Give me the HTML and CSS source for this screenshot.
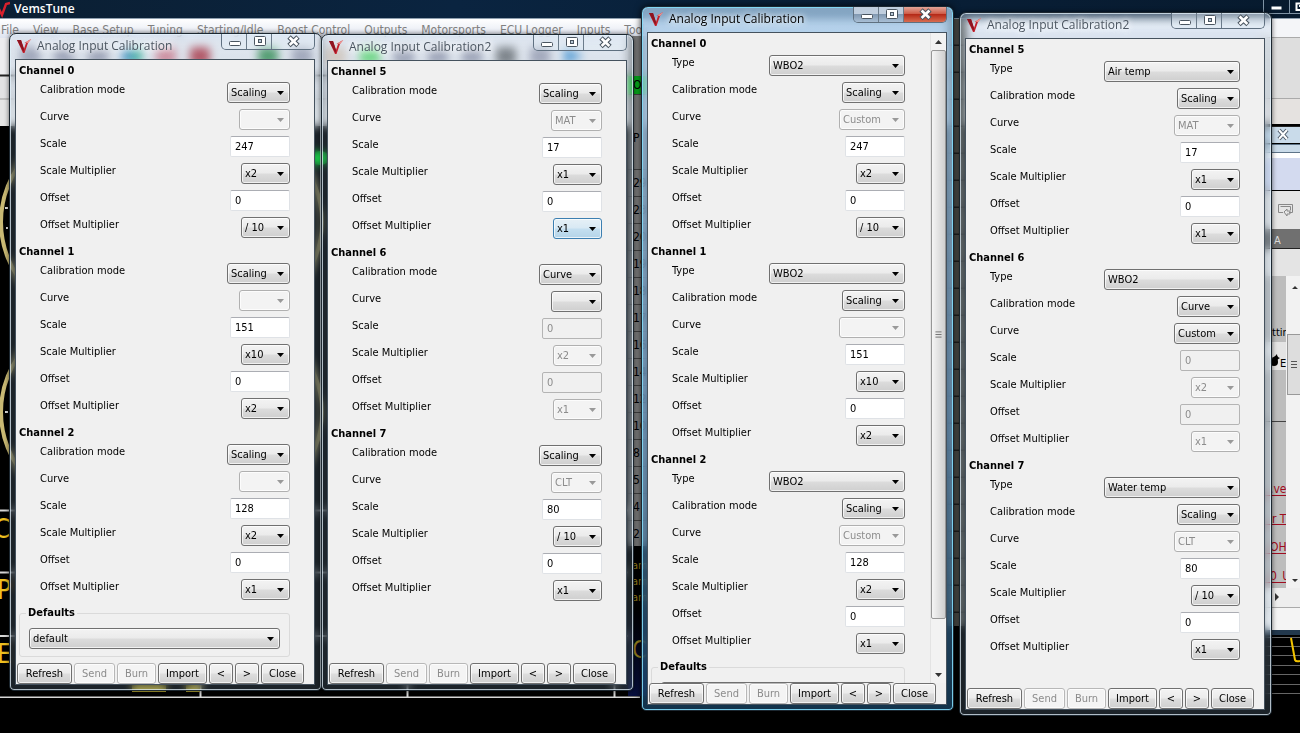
FILE: index.html
```
<!DOCTYPE html>
<html lang="en">
<head>
<meta charset="utf-8">
<title>VemsTune</title>
<link rel="stylesheet" href="styles.css">
</head>
<body>
<div class="desktop">
  <div class="app">
    <header class="app-title">
      <svg class="app-logo" viewBox="0 0 10 18" aria-hidden="true"><path d="M-4 3 L2 15 L6 4 L10 3" fill="none" stroke="#d8202c" stroke-width="2.4"/></svg>
      <h1>VemsTune</h1>
      <svg class="app-caption" viewBox="0 0 37 19" aria-hidden="true"><path d="M.5 0V13.500H37M26.500 0V14" fill="none" stroke="#7f93a5"/><rect x="8.500" y="6.500" width="10" height="3" fill="#fff"/><path d="M33.500 3.500H40V10H33.500ZM36 6H38" fill="none" stroke="#fff" stroke-width="2"/></svg>
    </header>
    <nav class="menu">
      <a href="#">File</a><a href="#">View</a><a href="#">Base Setup</a><a href="#">Tuning</a><a href="#">Starting/Idle</a><a href="#">Boost Control</a><a href="#">Outputs</a><a href="#">Motorsports</a><a href="#">ECU Logger</a><a href="#">Inputs</a><a href="#">Tools</a>
    </nav>
    <div class="toolbar">
      <i class="grey"></i><i class="grey"></i><i class="grey"></i><i class="bluegreen"></i><i class="pink"></i><i class="red"></i><i class="none"></i><i class="green"></i><i class="grey"></i><i class="tan"></i><i class="lime"></i><i class="grey"></i><i class="grey"></i><i class="grey"></i><i class="dark"></i><i class="grey"></i><i class="play"></i>
    </div>
    <svg class="gauges" viewBox="0 0 640 572" aria-hidden="true">
      <g fill="none" stroke="#c9b974" stroke-width="4">
        <circle cx="98" cy="96" r="97"/><circle cx="98" cy="286" r="97"/>
        <circle cx="225" cy="96" r="97"/><circle cx="225" cy="286" r="97"/>
      </g>
      <ellipse cx="320" cy="32" rx="9" ry="7" fill="#0f3"/>
      <path d="M5 82h3M6 102h2M5 286h3" stroke="#ddd" stroke-width="2"/>
      <path d="M0 384.500H640M0 446.500H640M0 510H640M0 571.500H640M200.500 500V572M407.500 500V572M614.500 500V572" stroke="#d6d6d6" stroke-width="2"/>
      <path d="M132 562h34M186 562h14" stroke="#b0a030" stroke-width="8"/>
      <g class="readout"><text x="-6" y="412">C</text><text x="-3" y="473">P</text><text x="-3" y="537">E</text></g>
    </svg>
    <div class="table-strip">
      <span class="led">O</span><span class="head">P</span>
      <span>29</span><span>23</span><span>20</span><span>19</span><span>18</span><span>17</span><span>16</span><span>14</span><span>12</span><span>10</span><span>8</span><span>5</span><span>4</span><span>2</span>
    </div>
    <div class="legend-strip"><span>am</span><span>am</span><span>am</span><b>C</b></div>
    <div class="mid-strip"></div>
    <svg class="right-strip" viewBox="0 0 40 700" aria-hidden="true">
      <rect width="40" height="700" fill="#000"/>
      <rect y="0" width="40" height="19" fill="#f4f5f8"/><rect y="19" width="40" height="60" fill="#dedede"/><path d="M0 18.500H40M0 79.500H40" stroke="#aaa"/>
      <rect y="80" width="40" height="25" fill="#e5e2e0"/><path d="M0 107.500H40" stroke="#222"/>
      <rect y="108" width="40" height="16" fill="#c9dbea"/><path d="M0 125.500H40M0 133.500H40" stroke="#5e7488"/><rect y="126" width="40" height="7" fill="#cadbe9"/>
      <path d="M19 111l8 9M27 111l-8 9" stroke="#4c5968" stroke-width="4"/><path d="M19 111l8 9M27 111l-8 9" stroke="#fff" stroke-width="2"/>
      <rect y="134" width="40" height="5" fill="#fff"/><rect y="139" width="40" height="32" fill="#d3daef"/>
      <rect y="172" width="40" height="38" fill="#e5e5e5"/><path d="M18.500 185.500H32.500V193.500H29M18.500 185.500V193.500H23M20.500 187.500H30.500V191.500M24 193l3-3v2h3v3h-3v2Z" fill="none" stroke="#888"/>
      <rect y="210" width="40" height="19" fill="#707070"/><text x="14" y="225" fill="#ddd">A</text><path d="M0 229.500H40" stroke="#222"/>
      <rect y="230" width="40" height="27" fill="#e4e4e4"/><rect y="257" width="40" height="322" fill="#bdbdbd"/>
      <rect y="323" width="26" height="28" fill="#e4e4e4"/><text x="12" y="317">tting</text><path d="M10 339q4 0 7 4q0-3 3-4q-3-1-3-4q-3 4-7 4Z"/><circle cx="14" cy="343" r="4"/><text x="20" y="348">E</text>
      <path d="M0 402.500H26" stroke="#444"/>
      <g class="red-link"><text x="10" y="474">.ve</text><text x="12" y="504">r T</text><text x="10" y="532">OH</text><text x="10" y="561">0_U</text><path d="M0 476.500H26M0 505.500H26M0 534.500H26M0 563.500H26" stroke="#a00c20"/></g>
      <rect x="26" y="257" width="14" height="332" fill="#f2f2f2"/><rect x="27.500" y="315.500" width="16" height="60" fill="#ddd" stroke="#999"/><path d="M31 342.500h6M31 345.500h6M31 348.500h6" stroke="#555"/>
      <rect y="569" width="40" height="20" fill="#eee"/><path d="M32 270l3-3 3 3ZM32 560l3 3 3-3ZM15 574l4 4-4 4Z" fill="#333"/><path d="M0 588.500H40" stroke="#aaa"/>
      <rect y="589" width="40" height="22" fill="#f4f4f4"/><rect y="611" width="40" height="5" fill="#22384d"/>
      <path d="M0 618.500H40M0 627.500H40M0 636.500H40M0 646.500H40M0 655.500H40M0 665.500H40M0 674.500H40" stroke="#666"/>
      <path d="M31 619L35 641Q36 643 40 642" fill="none" stroke="#f3c400" stroke-width="2"/>
    </svg>
  </div>
  <main class="windows"></main>
</div>
<script src="app.js"></script>
</body>
</html>
```
FILE: styles.css
```
* { box-sizing: border-box; }
body {
  margin: 0;
  background: #000;
  color: #000;
  font: 11px/16px "DejaVu Sans Condensed", Tahoma, "Noto Sans", sans-serif;
}
.desktop { position: relative; min-height: 100vh; overflow: hidden; }
h1, h2, h3 { margin: 0; font-size: inherit; }

/* Main application behind the dialogs */
.app-title {
  display: flex;
  align-items: center;
  height: 19px;
  background: linear-gradient(90deg, #0b1f33, #0a2440 35%, #071a2e);
  border-bottom: 1px solid #8fa0b0;
  color: #fff;
}
.app-title h1 { flex: 1; padding-left: 4px; font: 600 12px/18px "Open Sans", "Noto Sans", sans-serif; }
.app-logo { width: 10px; height: 18px; }
.app-caption { width: 37px; height: 19px; }
.menu {
  display: flex;
  gap: 14px;
  height: 19px;
  padding: 2px 1px 0;
  overflow: hidden;
  background: linear-gradient(#fff, #dfe4f0);
  font: 12px/18px "DejaVu Sans Condensed", Tahoma, sans-serif;
}
.menu a { color: #808080; text-decoration: none; white-space: nowrap; }
.toolbar {
  display: flex;
  gap: 14px;
  height: 88px;
  padding: 9px 20px;
  background: linear-gradient(#ececef 0 36px, #222 37px 38px, #e2e2e4 39px 60px, #999 61px, #e6e6e6 62px);
}
.toolbar i { width: 20px; height: 18px; border-radius: 4px; }
.grey { background: #99a; }
.bluegreen { background: linear-gradient(90deg, #48c, #3b8); }
.pink { background: #d67a88; }
.red { background: #b02a36; }
.green { background: #2d8a45; }
.tan { background: #dcc8b4; }
.lime { background: #5fdc6c; }
.dark { background: #666; }
.play { background: #3b8fd0; clip-path: polygon(0 0, 100% 50%, 0 100%); }
.gauges { display: block; width: 640px; height: 572px; }
.readout { fill: #f0c020; font: 26px "DejaVu Sans Condensed", sans-serif; }

/* Slivers of the application showing between dialogs */
.table-strip {
  position: absolute;
  left: 628px;
  top: 36px;
  width: 20px;
  height: 510px;
  padding-top: 40px;
  background: #808080;
}
.table-strip span { display: block; height: 27px; padding-left: 5px; border-bottom: 1px solid #444; font: 12px/26px "DejaVu Sans Condensed", sans-serif; }
.table-strip .led { height: 19px; background: #06b21c; line-height: 18px; }
.table-strip .head { height: 75px; padding-top: 30px; }
.legend-strip {
  position: absolute;
  left: 628px;
  top: 546px;
  width: 20px;
  height: 150px;
  padding: 12px 4px 0;
  overflow: hidden;
  background: linear-gradient(#000 60px, #081040);
  color: #a08a20;
}
.legend-strip span { display: block; }
.legend-strip b { display: block; margin-top: 32px; font: 24px/24px "DejaVu Sans Condensed", sans-serif; }
.mid-strip {
  position: absolute;
  left: 947px;
  top: 19px;
  width: 20px;
  height: 607px;
  background: repeating-linear-gradient(#53544f 0 25px, #222 26px 27px);
}
.right-strip { position: absolute; left: 1260px; top: 19px; width: 40px; height: 700px; font: 11px "DejaVu Sans Condensed", sans-serif; }
.red-link text { fill: #a00c20; font-size: 12px; }

/* Dialog windows */
.window {
  position: absolute;
  display: flex;
  flex-direction: column;
  width: 313px;
  padding: 0 6px 5px 5px;
  border: 1px solid #1c2730;
  border-radius: 7px 7px 5px 5px;
  background: linear-gradient(rgba(200, 220, 240, .35), rgba(140, 175, 205, .2) 60px);
  box-shadow: inset 0 0 0 1px rgba(225, 240, 250, .75), 0 0 5px rgba(0, 0, 0, .6);
  backdrop-filter: blur(4px);
}
.win-a { left: 9px; top: 33px; height: 658px; }
.win-b { left: 321px; top: 34px; height: 657px; }
.win-c { left: 641px; top: 6px; height: 705px; }
.win-d { left: 959px; top: 12px; height: 704px; }
.window.active {
  background: linear-gradient(rgba(155, 190, 220, .85), rgba(165, 205, 240, .65) 40px, rgba(110, 165, 215, .6) 60%, rgba(30, 85, 125, .6));
  box-shadow: inset 0 0 0 1px rgba(130, 220, 250, .9), 0 0 7px rgba(0, 0, 0, .8);
}
.titlebar { display: flex; height: 25px; flex: none; }
.titlebar h2 { flex: 1; padding-top: 3px; font: 12px/18px "Open Sans", "Noto Sans", sans-serif; color: #4b5560; text-shadow: 0 0 6px #fff, 0 0 6px #fff; }
.active .titlebar h2 { color: #000; }
.logo { width: 16px; height: 16px; margin: 4px 5px 0 1px; }
.caption { display: flex; height: 16px; border: 1px solid #5f7080; border-top: 0; border-radius: 0 0 5px 5px; overflow: hidden; }
.caption button { width: 25px; padding: 0; border: 0; border-right: 1px solid #6b7b8a; background: rgba(230, 240, 250, .35); }
.caption button:last-child { width: 42px; border-right: 0; }
.caption svg { display: block; width: 15px; height: 15px; margin: 0 auto; }
.active .caption button { background: linear-gradient(#c0cede 45%, #8299b2 50%, #a9bfd5); }
.active .caption button:last-child { background: linear-gradient(#e3a598, #cf5c48 45%, #b52a18 50%, #d86c50); }

.client { display: flex; flex: 1; flex-direction: column; min-height: 0; border: 1px solid #45525e; background: #f0f0f0; }
.scroller { display: flex; flex: 1; min-height: 0; }
.pane { flex: 1; min-width: 0; padding: 0 24px 0 3px; overflow: hidden; }
.with-bar .pane { padding-right: 25px; }
.channel h3 { height: 19px; line-height: 21px; }
.row { display: flex; align-items: flex-start; justify-content: space-between; height: 27px; padding: 3px 0 3px 21px; }
select, input, .footer button { font: inherit; color: #000; border-radius: 3px; height: 21px; }
select {
  appearance: none;
  width: 49px;
  padding: 0 16px 0 3px;
  border: 1px solid #707070;
  background: url("data:image/svg+xml,%3Csvg xmlns='http://www.w3.org/2000/svg' width='7' height='4'%3E%3Cpath d='M0 0h7L3.500 4z'/%3E%3C/svg%3E") no-repeat right 5px center, linear-gradient(#f3f3f3, #ebebeb 48%, #dcdcdc 52%, #cfcfcf);
  box-shadow: inset 0 0 0 1px rgba(255, 255, 255, .7);
}
select:disabled {
  border-color: #b0b0b0;
  background: url("data:image/svg+xml,%3Csvg xmlns='http://www.w3.org/2000/svg' width='7' height='4'%3E%3Cpath d='M0 0h7L3.500 4z' fill='%23999'/%3E%3C/svg%3E") no-repeat right 5px center, #f3f3f3;
  color: #8c8c8c;
  opacity: 1;
}
select.hot { border-color: #3c7fb1; background-color: #cfe8f8; background-image: url("data:image/svg+xml,%3Csvg xmlns='http://www.w3.org/2000/svg' width='7' height='4'%3E%3Cpath d='M0 0h7L3.500 4z'/%3E%3C/svg%3E"), linear-gradient(#e6f0f6, #d8e9f4 48%, #c4dff0 52%, #b4d4e8); }
select.w-curve { width: 51px; }
select.w-mode { width: 63px; }
select.w-custom { width: 66px; }
select.w-type { width: 136px; }
input { width: 60px; padding: 0 4px; border: 1px solid #dfe2e6; border-top-color: #abadb3; background: #fff; border-radius: 2px; }
input:disabled { border-color: #b4b4b4; background: #f0f0f0; color: #8c8c8c; }
fieldset { height: 52px; min-width: 0; margin: 2px 0 0; padding: 7px 9px; border: 1px solid #dadada; border-radius: 3px; }
legend { padding: 0 2px; margin-left: -3px; font-weight: bold; line-height: 16px; }
fieldset select { display: block; width: 100%; }
.scrollbar { display: flex; flex-direction: column; align-items: center; width: 16px; border-left: 1px solid #e3e3e3; background: #f2f2f2; }
.scrollbar svg { width: 15px; height: 17px; }
.thumb { display: flex; align-items: center; justify-content: center; flex: 1; width: 15px; border: 1px solid #979797; border-radius: 2px; background: linear-gradient(90deg, #f5f5f5, #e4e4e4 45%, #cfcfcf); }
.track-end { height: 47px; }
.footer { display: flex; flex: none; gap: 2px; padding: 0 1px; }
.footer button { padding: 0; border: 1px solid #707070; background: linear-gradient(#f3f3f3, #ebebeb 48%, #dddddd 52%, #cfcfcf); box-shadow: inset 0 0 0 1px rgba(255, 255, 255, .7); }
.footer button:disabled { border-color: #b8b8b8; background: #f4f4f4; color: #8c8c8c; }
.footer .b-refresh { width: 55px; }
.footer .b-send { width: 41px; }
.footer .b-burn { width: 39px; }
.footer .b-import { width: 49px; }
.footer .b-step { width: 24px; }
.footer .b-close { width: 43px; }
```
FILE: app.js
```
// Each channel: [number, type, mode, curve, scale, scale multiplier, offset, offset multiplier]
// A null type leaves out the Type row.
const dialogs = [
  { cls: 'win-a', title: 'Analog Input Calibration', defaults: true, channels: [
    [0, null, 'Scaling', '', '247', 'x2', '0', '/ 10'],
    [1, null, 'Scaling', '', '151', 'x10', '0', 'x2'],
    [2, null, 'Scaling', '', '128', 'x2', '0', 'x1']] },
  { cls: 'win-b', title: 'Analog Input Calibration2', hot: 5, channels: [
    [5, null, 'Scaling', 'MAT', '17', 'x1', '0', 'x1'],
    [6, null, 'Curve', '', '0', 'x2', '0', 'x1'],
    [7, null, 'Scaling', 'CLT', '80', '/ 10', '0', 'x1']] },
  { cls: 'win-d', title: 'Analog Input Calibration2', channels: [
    [5, 'Air temp', 'Scaling', 'MAT', '17', 'x1', '0', 'x1'],
    [6, 'WBO2', 'Curve', 'Custom', '0', 'x2', '0', 'x1'],
    [7, 'Water temp', 'Scaling', 'CLT', '80', '/ 10', '0', 'x1']] },
  { cls: 'win-c active', title: 'Analog Input Calibration', defaults: true, scroll: true, channels: [
    [0, 'WBO2', 'Scaling', 'Custom', '247', 'x2', '0', '/ 10'],
    [1, 'WBO2', 'Scaling', '', '151', 'x10', '0', 'x2'],
    [2, 'WBO2', 'Scaling', 'Custom', '128', 'x2', '0', 'x1']] }
];

let uid = 0;
const row = (label, make) => {
  const id = 'f' + (++uid);
  return `<div class="row"><label for="${id}">${label}</label>${make(id)}</div>`;
};
const pick = (value, cls, off) => id =>
  `<select id="${id}" class="${cls}"${off ? ' disabled' : ''}><option>${value}</option></select>`;
const box = (value, off) => id => `<input id="${id}" type="text" value="${value}"${off ? ' disabled' : ''}>`;

function channel([n, type, mode, curve, scale, sMul, offset, oMul], hot) {
  const curved = mode === 'Curve';
  return `<section class="channel"><h3>Channel ${n}</h3>` +
    (type ? row('Type', pick(type, 'w-type')) : '') +
    row('Calibration mode', pick(mode, 'w-mode')) +
    row('Curve', pick(curve, type ? 'w-custom' : 'w-curve', !curved)) +
    row('Scale', box(scale, curved)) +
    row('Scale Multiplier', pick(sMul, '', curved)) +
    row('Offset', box(offset, curved)) +
    row('Offset Multiplier', pick(oMul, hot === n ? 'hot' : '', curved)) + '</section>';
}

const icon = body => `<svg viewBox="0 0 15 15" aria-hidden="true">${body}</svg>`;
const minimize = icon('<rect x="2.500" y="7.500" width="11" height="4" rx="1" fill="#fff" stroke="#4a5560"/>');
const maximize = icon('<rect x="2.500" y="2.500" width="11" height="9" rx="1" fill="#fff" stroke="#4a5560"/><rect x="6.500" y="5.500" width="3" height="3" fill="#b9c8d6" stroke="#4a5560"/>');
const cross = icon('<path d="M3 3L12 11.500M12 3L3 11.500" stroke="#4a5560" stroke-width="4.800"/><path d="M3.600 3.500L11.400 11M11.400 3.500L3.600 11" stroke="#fff" stroke-width="2.600"/>');
const logo = '<svg class="logo" viewBox="0 0 16 16" aria-hidden="true"><path d="M1 2H5L8 11L10 5L8.500 5L15 1L12 5L8.500 15H7Z" fill="#c4202c"/><path d="M1 2H5L8 11L7.500 14Z" fill="#8d1420"/><path d="M9 4.500L15.500 1L12 5Z" fill="#f0958f"/></svg>';
const bar = '<div class="scrollbar"><svg viewBox="0 0 15 17"><path d="M4 11l3.500-4 3.500 4z" fill="#333"/></svg><div class="thumb"><svg viewBox="0 0 15 17"><path d="M4 5.500h7M4 8.500h7M4 11.500h7" stroke="#666"/></svg></div><div class="track-end"></div><svg viewBox="0 0 15 17"><path d="M4 7l3.500 4 3.500-4z" fill="#333"/></svg></div>';

document.querySelector('.windows').innerHTML = dialogs.map(d => `
<article class="window ${d.cls}">
  <header class="titlebar">${logo}<h2>${d.title}</h2>
    <div class="caption"><button aria-label="Minimize">${minimize}</button><button aria-label="Maximize">${maximize}</button><button aria-label="Close">${cross}</button></div>
  </header>
  <div class="client">
    <div class="scroller${d.scroll ? ' with-bar' : ''}">
      <div class="pane">${d.channels.map(c => channel(c, d.hot)).join('')}
        ${d.defaults ? '<fieldset><legend>Defaults</legend><select aria-label="Defaults"><option>default</option></select></fieldset>' : ''}
      </div>${d.scroll ? bar : ''}
    </div>
    <footer class="footer">
      <button class="b-refresh">Refresh</button><button class="b-send" disabled>Send</button><button class="b-burn" disabled>Burn</button><button class="b-import">Import</button><button class="b-step">&lt;</button><button class="b-step">&gt;</button><button class="b-close">Close</button>
    </footer>
  </div>
</article>`).join('');
```
